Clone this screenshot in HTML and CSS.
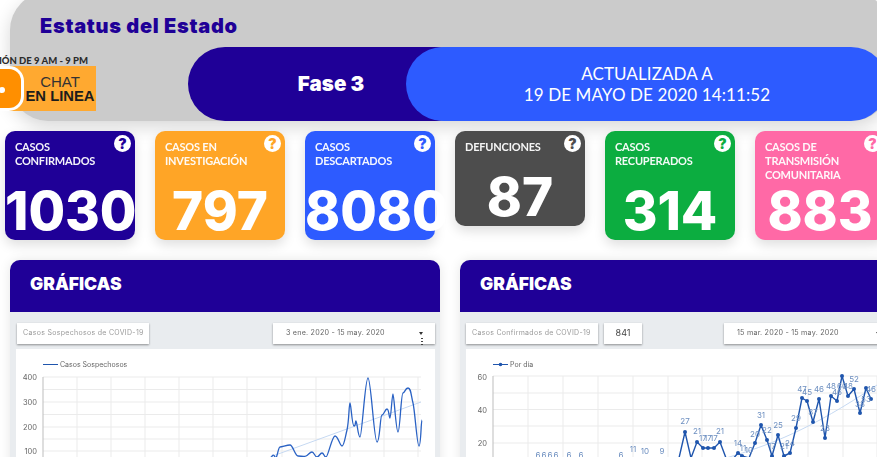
FILE: index.html
```html
<!DOCTYPE html>
<html lang="es">
<head>
<meta charset="utf-8">
<title>Estatus del Estado</title>
<link rel="stylesheet" href="styles.css">
</head>
<body>
<div class="page">
  <header class="status">
    <h1 class="status-title">Estatus del Estado</h1>
    <div class="pills">
      <div class="pill-phase">Fase 3</div>
      <div class="pill-date">ACTUALIZADA A<br>19 DE MAYO DE 2020 14:11:52</div>
    </div>
  </header>
  <aside class="chat">
    <div class="chat-caption">ATENCIÓN DE 9 AM - 9 PM</div>
    <div class="chat-box">
      <div class="chat-icon"><span class="chat-dot"></span></div>
      <div class="chat-text"><span class="chat-light">CHAT</span><strong class="chat-strong">EN LINEA</strong></div>
    </div>
  </aside>
  <section class="cards">
    <article class="card navy"><span class="help">?</span><div class="card-label">CASOS<br>CONFIRMADOS</div><div class="card-num">1030</div></article>
    <article class="card orange"><span class="help">?</span><div class="card-label">CASOS EN<br>INVESTIGACIÓN</div><div class="card-num">797</div></article>
    <article class="card blue"><span class="help">?</span><div class="card-label">CASOS<br>DESCARTADOS</div><div class="card-num">8080</div></article>
    <article class="card dark"><span class="help">?</span><div class="card-label card-label-short">DEFUNCIONES</div><div class="card-num">87</div></article>
    <article class="card green"><span class="help">?</span><div class="card-label">CASOS<br>RECUPERADOS</div><div class="card-num">314</div></article>
    <article class="card pink"><span class="help">?</span><div class="card-label">CASOS DE<br>TRANSMISIÓN<br>COMUNITARIA</div><div class="card-num">883</div></article>
  </section>
  <section class="panels">
    <article class="panel">
      <h2 class="panel-head">GRÁFICAS</h2>
      <div class="toolbar">
        <div class="ctl ctl-title">Casos Sospechosos de COVID-19</div>
        <div class="ctl ctl-date ctl-date-left">3 ene. 2020 - 15 may. 2020<span class="caret"></span><span class="dots"></span></div>
      </div>
      <div class="chart">
        <svg class="plot" viewBox="16 349 419 108" width="419" height="108">
          <g class="grid">
            <path d="M43 377H421M43 389.500H421M43 402H421M43 414.500H421M43 427H421M43 439H421M43 451H421"/>
            <path d="M77 377V457M111 377V457M145 377V457M179 377V457M213 377V457M247 377V457M282 377V457M316 377V457M350 377V457M384 377V457M418 377V457"/>
          </g>
          <path class="axis" d="M43 377V457"/>
          <g class="tick">
            <text x="37" y="380" text-anchor="end">400</text>
            <text x="37" y="405" text-anchor="end">300</text>
            <text x="37" y="430" text-anchor="end">200</text>
            <text x="37" y="454" text-anchor="end">100</text>
          </g>
          <path class="legend-line" d="M43 364.500H58"/>
          <text class="legend" x="60" y="367">Casos Sospechosos</text>
          <path class="trend" d="M270 457L421 402"/>
          <path class="series-smooth" d="M270 460C272 456 273 453 275 457S278 447 280 447S287 445 290 445S295 456 298 456S304 457 306 456S310 452 312 452S315 457 317 457S320 453 322 453S324 457 326 457S332 436 335 436S340 446 342 446S345 438 347 430S349 403 350 403S352 426 354 426S355 421 356 421S358 437 360 437S365 378 368 378S374 442 377 442S380 415 382 415S385 409 387 409S389 418 390 418S392 394 393 394S396 432 398 432S401 393 403 393S405 388 408 388S411 395 413 403S417 446 419 446S421 420 422 420"/>
        </svg>
      </div>
    </article>
    <article class="panel">
      <h2 class="panel-head">GRÁFICAS</h2>
      <div class="toolbar">
        <div class="ctl ctl-title ctl-title-right">Casos Confirmados de COVID-19</div>
        <div class="ctl ctl-count">841</div>
        <div class="ctl ctl-date ctl-date-right">15 mar. 2020 - 15 may. 2020<span class="caret"></span></div>
      </div>
      <div class="chart">
        <svg class="plot" viewBox="466 349 424 108" width="424" height="108">
          <g class="grid">
            <path d="M493 376H877M493 393H877M493 409.500H877M493 426H877M493 443H877"/>
            <path d="M528 376V457M563 376V457M598 376V457M633 376V457M668 376V457M702 376V457M738 376V457M772 376V457M808 376V457M843 376V457M877 376V457"/>
          </g>
          <path class="axis" d="M493 376V457"/>
          <g class="tick">
            <text x="487" y="380" text-anchor="end">60</text>
            <text x="487" y="413" text-anchor="end">40</text>
            <text x="487" y="446" text-anchor="end">20</text>
          </g>
          <path class="legend-dotline" d="M493 364.500H508"/>
          <circle class="point" cx="500.500" cy="364.500" r="1.800"/>
          <text class="legend" x="510" y="367">Por día</text>
          <path class="trend" d="M726 458C770 445 810 430 877 385"/>
          <path class="series" d="M679 458L685 432L691 458L697 442L703 448L708 448L714 448L720 442L726 458L732 460L738 453L742 456L749 458L755 443L761 425L767 440L772 456L778 435L784 456L790 453L796 428L802 398L807 401L813 422L819 399L825 438L831 396L837 401L842 376L848 396L854 389L860 413L866 388L871 399"/>
          <g class="point">
            <circle cx="685" cy="432" r="2"/><circle cx="697" cy="442" r="2"/><circle cx="703" cy="448" r="2"/><circle cx="708" cy="448" r="2"/><circle cx="714" cy="448" r="2"/><circle cx="720" cy="442" r="2"/><circle cx="738" cy="453" r="2"/><circle cx="742" cy="456" r="2"/><circle cx="755" cy="443" r="2"/><circle cx="761" cy="425" r="2"/><circle cx="767" cy="440" r="2"/><circle cx="772" cy="456" r="2"/><circle cx="778" cy="435" r="2"/><circle cx="784" cy="456" r="2"/><circle cx="790" cy="453" r="2"/><circle cx="796" cy="428" r="2"/><circle cx="802" cy="398" r="2"/><circle cx="807" cy="401" r="2"/><circle cx="813" cy="422" r="2"/><circle cx="819" cy="399" r="2"/><circle cx="825" cy="438" r="2"/><circle cx="831" cy="396" r="2"/><circle cx="837" cy="401" r="2"/><circle cx="842" cy="376" r="2"/><circle cx="848" cy="396" r="2"/><circle cx="854" cy="389" r="2"/><circle cx="860" cy="413" r="2"/><circle cx="866" cy="388" r="2"/><circle cx="871" cy="399" r="2"/>
          </g>
          <g class="dl">
            <text x="538" y="458">6</text><text x="544" y="458">6</text><text x="550" y="458">6</text><text x="556" y="458">6</text><text x="569" y="458">6</text><text x="581" y="458">6</text><text x="621" y="458">6</text>
            <text x="633" y="452">11</text><text x="645" y="454">10</text><text x="662" y="454">9</text>
            <text x="685" y="424">27</text><text x="697" y="434">21</text><text x="703" y="441">17</text><text x="708" y="441">17</text><text x="714" y="441">17</text><text x="720" y="434">21</text>
            <text x="738" y="446">14</text><text x="743" y="451">11</text><text x="749" y="453">10</text><text x="755" y="437">20</text><text x="761" y="418">31</text><text x="767" y="433">22</text><text x="772" y="449">17</text><text x="778" y="428">25</text><text x="784" y="449">21</text><text x="790" y="446">24</text><text x="796" y="421">29</text>
            <text x="802" y="392">47</text><text x="807" y="395">45</text><text x="813" y="415">37</text><text x="819" y="392">46</text><text x="825" y="431">23</text><text x="831" y="389">48</text><text x="837" y="395">46</text><text x="842" y="389">60</text><text x="848" y="389">48</text><text x="854" y="382">52</text><text x="860" y="407">38</text><text x="866" y="402">53</text><text x="871" y="392">46</text>
          </g>
        </svg>
      </div>
    </article>
  </section>
</div>
</body>
</html>
```
FILE: styles.css
```css
* { box-sizing: border-box; }
html, body { margin: 0; padding: 0; background: #fff; }
.page {
  position: relative;
  width: 877px;
  height: 457px;
  overflow: hidden;
  font-family: "Lato", "Liberation Sans", sans-serif;
}

/* status header */
.status {
  width: 880px;
  height: 129px;
  margin: -8px 0 0 10px;
  padding-top: 16px;
  background: #cbcbcb;
  border-radius: 38px;
  box-shadow: 0 6px 18px rgba(0, 0, 0, .16);
}
.status-title {
  margin: 0 0 0 30px;
  height: 39px;
  line-height: 37px;
  font-family: "Inter", sans-serif;
  font-size: 20px;
  font-weight: 900;
  letter-spacing: .7px;
  color: #1f0097;
}
.pills { display: flex; margin-left: 178px; }
.pill-phase {
  width: 286px;
  height: 74px;
  border-radius: 37px;
  background: #1f0097;
  color: #fff;
  font-family: "Inter", sans-serif;
  font-size: 20.500px;
  font-weight: 900;
  line-height: 73px;
  text-align: center;
}
.pill-date {
  width: 482px;
  height: 74px;
  margin-left: -68px;
  padding-top: 16px;
  border-radius: 37px;
  background: #2d5bff;
  color: #fff;
  font-size: 17px;
  line-height: 21px;
  letter-spacing: .1px;
  text-align: center;
}

/* floating chat badge */
.chat { position: absolute; left: -40px; top: 55px; width: 136px; }
.chat-caption {
  height: 11px;
  padding-right: 8px;
  font-size: 9.500px;
  line-height: 11px;
  font-weight: 900;
  color: #2b2b2b;
  text-align: right;
  white-space: nowrap;
}
.chat-box { display: flex; height: 45px; background: #ffa930; }
.chat-icon {
  position: relative;
  width: 64px;
  flex: none;
  background: #ff8f00;
  border: 3px solid #fff;
  border-left: 0;
  border-radius: 0 15px 15px 0;
}
.chat-dot {
  position: absolute;
  left: 39px;
  top: 18px;
  width: 6px;
  height: 6px;
  border-radius: 50%;
  background: #fff;
}
.chat-text {
  flex: 1;
  padding-top: 8px;
  text-align: center;
  color: #1c1c1c;
  white-space: nowrap;
  font-family: "Liberation Sans", sans-serif;
}
.chat-light { display: block; font-size: 15px; line-height: 15px; font-weight: 400; color: #333; }
.chat-strong { display: block; font-size: 14.800px; line-height: 15px; font-weight: 700; }

/* stat cards */
.cards { display: flex; align-items: flex-start; gap: 20px; margin: 10px 0 0 5px; }
.card {
  position: relative;
  flex: none;
  width: 130px;
  padding: 9px 0 0 10px;
  border-radius: 10px;
  color: #fff;
  box-shadow: 0 5px 12px rgba(0, 0, 0, .13);
}
.navy { background: #1f0097; }
.orange { background: #ffa526; }
.blue { background: #2d5bff; }
.dark { background: #4d4d4d; }
.green { background: #0cad40; }
.pink { background: #ff69a6; }
.help {
  position: absolute;
  top: 4px;
  right: 4px;
  width: 17px;
  height: 17px;
  border-radius: 50%;
  background: #fff;
  font-family: "Inter", sans-serif;
  font-size: 14px;
  line-height: 17px;
  font-weight: 900;
  text-align: center;
}
.navy .help { color: #1f0097; }
.orange .help { color: #ffa526; }
.blue .help { color: #2d5bff; }
.dark .help { color: #4d4d4d; }
.green .help { color: #0cad40; }
.pink .help { color: #ff69a6; }
.card-label {
  height: 42px;
  font-size: 11px;
  line-height: 14px;
  font-weight: 700;
  letter-spacing: -.2px;
  opacity: .95;
}
.card-label-short { height: 28px; }
.card-num {
  width: 130px;
  margin-left: -10px;
  height: 58px;
  font-family: "Inter", sans-serif;
  font-size: 53px;
  line-height: 58px;
  font-weight: 800;
  text-align: center;
  white-space: nowrap;
}

/* chart panels */
.panels { display: flex; gap: 20px; margin: 20px 0 0 10px; }
.panel {
  flex: none;
  width: 430px;
  height: 240px;
  background: #e9ecef;
  border-radius: 10px 10px 0 0;
  box-shadow: 0 0 12px rgba(0, 0, 0, .1);
}
.panel-head {
  margin: 0;
  height: 52px;
  padding-left: 20px;
  border-radius: 10px 10px 0 0;
  background: #1f0097;
  color: #fff;
  font-family: "Inter", sans-serif;
  font-size: 17.500px;
  line-height: 47px;
  font-weight: 900;
}
.toolbar { display: flex; height: 37px; padding: 11px 0 0 6px; }
.ctl {
  position: relative;
  height: 21px;
  background: #fff;
  box-shadow: 0 1px 2px rgba(0, 0, 0, .4);
  font-family: "Inter", "Liberation Sans", sans-serif;
  font-size: 7px;
  line-height: 20px;
  color: #9a9a9a;
  white-space: nowrap;
  filter: blur(.25px);
}
.ctl-title { width: 132px; padding-left: 6px; margin-left: 1px; letter-spacing: .3px; }
.ctl-title-right { margin-left: 0; }
.ctl-count { width: 38px; margin-left: 6px; text-align: center; font-size: 9px; color: #444; }
.ctl-date { color: #666; font-size: 7.200px; letter-spacing: .2px; }
.ctl-date-left { width: 162px; margin-left: 124px; padding-left: 13px; }
.ctl-date-right { width: 160px; margin-left: 82px; padding-left: 13px; }
.caret {
  position: absolute;
  right: 12px;
  top: 9px;
  border: 2px solid transparent;
  border-top: 3px solid #333;
  border-bottom: 0;
}
.ctl-date-right .caret { right: 4px; }
.dots {
  position: absolute;
  right: 12px;
  top: 15px;
  width: 2px;
  height: 7px;
  background: repeating-linear-gradient(#444 0 1px, transparent 1px 3px);
}
.chart { height: 108px; margin: 0 5px 0 6px; background: #fff; }
.panel + .panel .chart { margin-right: 0; }
.plot { display: block; font-family: "Inter", "Liberation Sans", sans-serif; filter: blur(.2px); }
.grid path { fill: none; stroke: #ebebeb; stroke-width: 1; }
.axis { fill: none; stroke: #bdbdbd; stroke-width: 1; }
.tick text { font-size: 7.500px; fill: #666; }
.legend { font-size: 7px; fill: #666; }
.legend-line { stroke: #1f55ad; stroke-width: 1; }
.legend-dotline { stroke: #1f55ad; stroke-width: 1; }
.trend { fill: none; stroke: #c6d9f2; stroke-width: 1; }
.series-smooth { fill: none; stroke: #2a62c4; stroke-width: 1.300; }
.series { fill: none; stroke: #1f55ad; stroke-width: 1.400; stroke-linejoin: round; }
.point { fill: #1f55ad; }
.dl text { font-size: 8px; fill: #6d8fc0; text-anchor: middle; }
```
